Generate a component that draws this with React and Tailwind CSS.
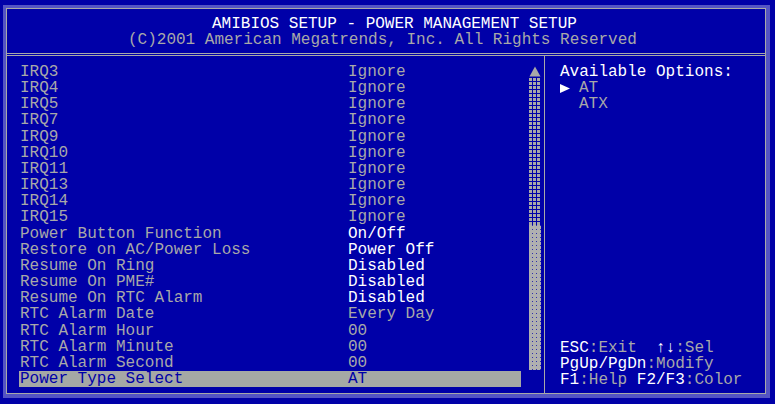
import React from 'react';

const BLUE = '#0000a8';

const rows = [
  ['IRQ3', 'Ignore', false],
  ['IRQ4', 'Ignore', false],
  ['IRQ5', 'Ignore', false],
  ['IRQ7', 'Ignore', false],
  ['IRQ9', 'Ignore', false],
  ['IRQ10', 'Ignore', false],
  ['IRQ11', 'Ignore', false],
  ['IRQ13', 'Ignore', false],
  ['IRQ14', 'Ignore', false],
  ['IRQ15', 'Ignore', false],
  ['Power Button Function', 'On/Off', true],
  ['Restore on AC/Power Loss', 'Power Off', true],
  ['Resume On Ring', 'Disabled', true],
  ['Resume On PME#', 'Disabled', true],
  ['Resume On RTC Alarm', 'Disabled', true],
  ['RTC Alarm Date', 'Every Day', false],
  ['RTC Alarm Hour', '00', false],
  ['RTC Alarm Minute', '00', false],
  ['RTC Alarm Second', '00', false],
];

const ScrollBar = () => (
  <svg width="12" height="305" viewBox="0 0 12 305" className="block">
    <defs>
      <pattern id="track" width="4" height="4" patternUnits="userSpaceOnUse">
        <rect width="4" height="4" fill={BLUE} />
        <rect width="3" height="3" fill="#a8a8a8" />
      </pattern>
      <pattern id="thumb" width="4" height="4" patternUnits="userSpaceOnUse">
        <rect width="4" height="4" fill="#b0b0b0" />
        <rect x="3" y="3" width="1" height="1" fill="#3030a8" />
      </pattern>
    </defs>
    <polygon points="6,0.5 0.5,10.5 11.5,10.5" fill="#a8a8a8" />
    <rect x="0" y="12" width="12" height="147" fill="url(#track)" />
    <rect x="0" y="159" width="12" height="145" fill="url(#thumb)" />
  </svg>
);

export default function App() {
  return (
    <div className="w-[775px] h-[404px] bg-[#0000a8] pt-[5px] pl-[3px] font-['Liberation_Mono',monospace] text-[16px] leading-[16.16px] text-[#a8a8a8]">
      <div className="w-[767px] h-[393px] bg-[#5454c4] pl-[3px] pt-[3px] pr-[4px] pb-[4px]">
        <div className="h-full border border-[#a8a8a8] bg-[#0000a8] flex flex-col">
          <div className="h-[45px] border-b border-[#a8a8a8] pt-[7px] whitespace-pre">
            <div className="pl-[205px] text-white">AMIBIOS SETUP - POWER MANAGEMENT SETUP</div>
            <div className="pl-[121px]">(C)2001 American Megatrends, Inc. All Rights Reserved</div>
          </div>
          <div className="flex-1 flex mt-px border-t border-[#a8a8a8]">
            <div className="w-[538px] border-r border-[#a8a8a8] flex items-start pt-[8px] pl-[12px]">
              <div className="w-[502px] whitespace-pre">
                {rows.map(([label, value, bright]) => (
                  <div key={label} className="flex pl-px h-[16.16px]">
                    <span className="w-[328px]">{label}</span>
                    <span className={bright ? 'text-white' : ''}>{value}</span>
                  </div>
                ))}
                <div className="flex pl-px h-[16.16px] bg-[#a5a8a5] text-[#0000a8]">
                  <span className="w-[328px]">Power Type Select</span>
                  <span>AT</span>
                </div>
              </div>
              <div className="ml-[8px] pt-[2px]">
                <ScrollBar />
              </div>
            </div>
            <div className="flex-1 flex flex-col pt-[8px] pl-[15px] pb-[5px] whitespace-pre">
              <div className="text-white">Available Options:</div>
              <div className="flex items-center h-[16.16px]">
                <svg width="10" height="9" viewBox="0 0 10 9" className="mr-[9px]">
                  <polygon points="0,0 10,4.5 0,9" fill="#ffffff" />
                </svg>
                <span>AT</span>
              </div>
              <div className="pl-[19px]">ATX</div>
              <div className="mt-auto">
                <div>
                  <span className="text-white">ESC</span>:Exit  <span className="text-white">↑↓</span>:Sel
                </div>
                <div>
                  <span className="text-white">PgUp/PgDn</span>:Modify
                </div>
                <div>
                  <span className="text-white">F1</span>:Help <span className="text-white">F2/F3</span>:Color
                </div>
              </div>
            </div>
          </div>
        </div>
      </div>
    </div>
  );
}
